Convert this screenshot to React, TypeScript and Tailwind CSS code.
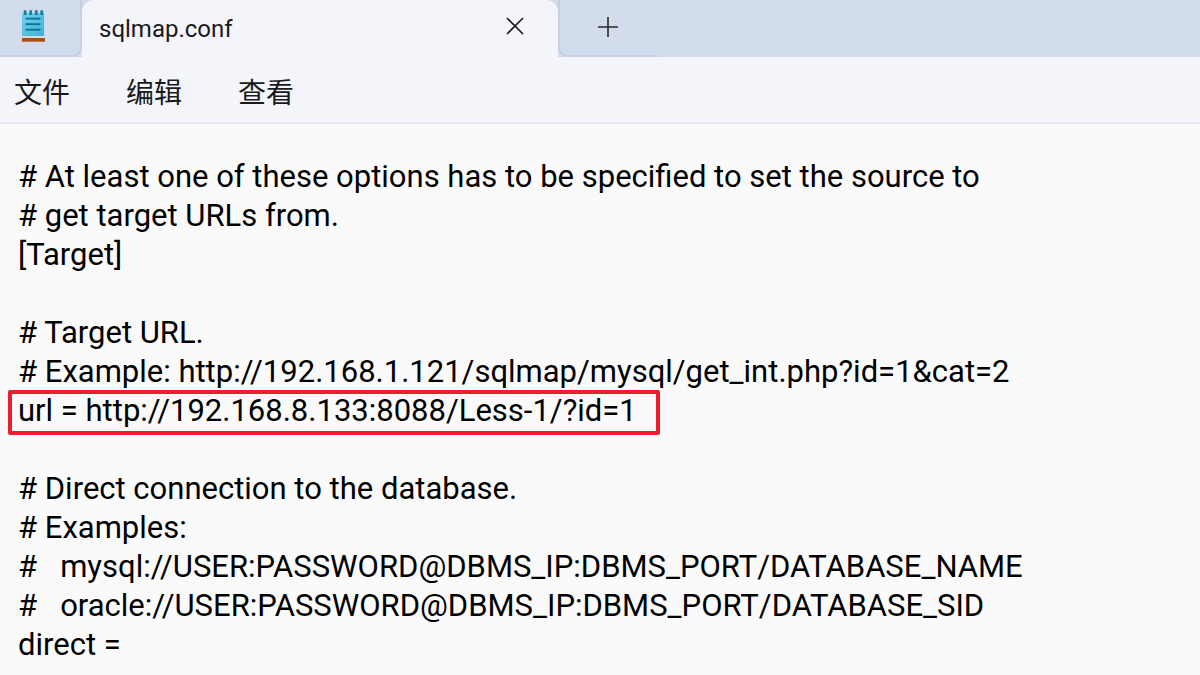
const lines = [
  "# At least one of these options has to be specified to set the source to",
  "# get target URLs from.",
  "[Target]",
  "",
  "# Target URL.",
  "# Example: http://192.168.1.121/sqlmap/mysql/get_int.php?id=1&cat=2",
  "url = http://192.168.8.133:8088/Less-1/?id=1",
  "",
  "# Direct connection to the database.",
  "# Examples:",
  "#   mysql://USER:PASSWORD@DBMS_IP:DBMS_PORT/DATABASE_NAME",
  "#   oracle://USER:PASSWORD@DBMS_IP:DBMS_PORT/DATABASE_SID",
  "direct =",
];

function NotepadIcon() {
  return (
    <svg width="24" height="32" viewBox="0 0 26 34">
      <defs>
        <linearGradient id="pad" x1="0" y1="0" x2="1" y2="1">
          <stop offset="0" stopColor="#72d0ee" />
          <stop offset="1" stopColor="#3fb0d4" />
        </linearGradient>
      </defs>
      <rect x="1" y="3" width="24" height="25" fill="url(#pad)" />
      <rect x="1" y="28" width="24" height="2" fill="#d8dde0" />
      <rect x="1" y="30" width="25" height="4" fill="#a8500f" />
      <rect x="3" y="0" width="3" height="5" fill="#0f7d9e" />
      <rect x="9" y="0" width="3" height="5" fill="#0f7d9e" />
      <rect x="15" y="0" width="3" height="5" fill="#0f7d9e" />
      <rect x="21" y="0" width="3" height="5" fill="#0f7d9e" />
      <rect x="5" y="8" width="16" height="2" fill="#0b7394" />
      <rect x="5" y="14" width="16" height="2" fill="#0b7394" />
      <rect x="5" y="20" width="16" height="2" fill="#0b7394" />
    </svg>
  );
}

export default function App() {
  return (
    <div className="w-[1200px] h-[675px] overflow-hidden flex flex-col bg-[#fafafa] font-['Roboto','Noto_Sans_CJK_SC',sans-serif] text-[#1a1a1a]">
      <div className="h-[57px] shrink-0 flex bg-[#d3dcec]">
        <div className="w-[82px] flex items-center justify-center pr-[14px] pb-[4px] rounded-br-[10px] border-b-[2px] border-r-[2px] border-[#c6d0e4]">
          <NotepadIcon />
        </div>
        <div className="w-[476px] bg-[#f3f5fb] rounded-t-[12px] flex items-center pl-[17px] pr-[33px] justify-between">
          <span className="text-[24px]">sqlmap.conf</span>
          <svg width="20" height="20" viewBox="0 0 20 20" stroke="#1a1a1a" strokeWidth="1.6" className="-mt-[5px]">
            <path d="M2 2 L18 18 M18 2 L2 18" />
          </svg>
        </div>
        <div className="w-[100px] flex items-center pl-[38px] border-l-[2px] border-b-[2px] border-[#c6d0e4] rounded-bl-[10px]">
          <svg width="20" height="20" viewBox="0 0 20 20" stroke="#2a2a2a" strokeWidth="1.6" className="-mt-[1px]">
            <path d="M0 10 H20 M10 0 V20" />
          </svg>
        </div>
      </div>
      <div className="h-[67px] shrink-0 flex items-center gap-[56px] pl-[14px] pt-[8px] bg-[#f3f5fb] border-b-[2px] border-[#e6e8ec] text-[28px]">
        <span>文件</span>
        <span>编辑</span>
        <span>查看</span>
      </div>
      <div className="pt-[33px] pl-[18px] text-[31px] leading-[39px] text-black whitespace-pre">
        {lines.map((l, i) => (
          <div key={i} className="relative h-[39px]">
            {l}
            {i === 6 && (
              <div className="absolute left-[-10px] top-[-1px] w-[652px] h-[45px] border-[4px] border-[#ee1c2e] rounded-[2px]" />
            )}
          </div>
        ))}
      </div>
    </div>
  );
}
